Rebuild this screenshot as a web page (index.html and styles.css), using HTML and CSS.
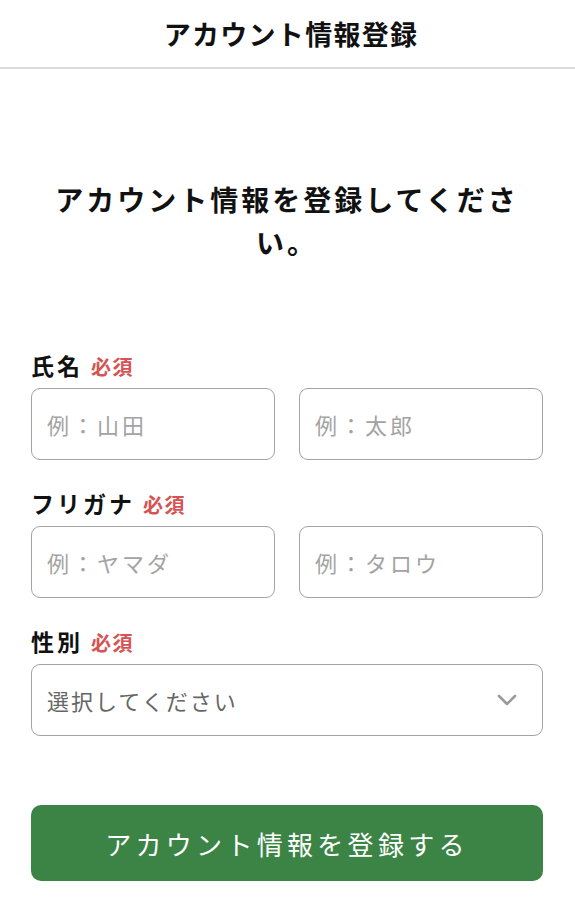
FILE: index.html
```html
<!DOCTYPE html>
<html lang="ja">
    <head>
        <meta charset="UTF-8">
        <title>アカウント情報登録</title>
        <link rel="stylesheet" href="styles.css">
    </head>
    <body>
        <header class="topbar">
            <h1 class="topbar-title">アカウント情報登録</h1>
        </header>
        <main class="page">
            <h2 class="lead">アカウント情報を登録してください。</h2>
            <form class="form">
                <div class="field">
                    <label class="label">氏名<span class="req">必須</span></label>
                    <div class="pair">
                        <input class="input" type="text" placeholder="例：山田">
                        <input class="input" type="text" placeholder="例：太郎">
                    </div>
                </div>
                <div class="field">
                    <label class="label">フリガナ<span class="req">必須</span></label>
                    <div class="pair">
                        <input class="input" type="text" placeholder="例：ヤマダ">
                        <input class="input" type="text" placeholder="例：タロウ">
                    </div>
                </div>
                <div class="field">
                    <label class="label">性別<span class="req">必須</span></label>
                    <div class="select-wrap">
                        <select class="input select">
                            <option>選択してください</option>
                            <option>男性</option>
                            <option>女性</option>
                        </select>
                        <svg class="chevron" width="20" height="12" viewBox="0 0 20 12">
                            <path d="M2 2 L10 10 L18 2" fill="none" stroke="#9a9a9a" stroke-width="2.6" stroke-linecap="round" stroke-linejoin="round"/>
                        </svg>
                    </div>
                </div>
                <button class="submit" type="button">アカウント情報を登録する</button>
            </form>
        </main>
    </body>
</html>
```

FILE: styles.css
```css
*{
    box-sizing: border-box;
}
body{
    margin: 0;
    background: #fff;
    color: #111;
    font-family: "Noto Sans CJK JP", "Noto Sans", sans-serif;
}
.topbar{
    height: 69px;
    padding-left: 7px;
    border-bottom: 2px solid #dcdcdc;
    display: flex;
    align-items: center;
    justify-content: center;
}
.topbar-title{
    margin: 0;
    font-size: 27px;
    font-weight: 700;
    letter-spacing: 1.3px;
    line-height: 1;
}
.page{
    padding: 0 32px 0 31px;
}
.lead{
    margin: 109px 0 0;
    font-size: 28px;
    font-weight: 700;
    line-height: 43px;
    letter-spacing: 3px;
    text-align: center;
}
.form{
    margin-top: 86px;
}
.field{
    margin-bottom: 28px;
}
.label{
    display: block;
    height: 30px;
    line-height: 30px;
    margin-bottom: 8px;
    font-size: 23px;
    font-weight: 700;
    letter-spacing: 3px;
}
.req{
    margin-left: 8px;
    font-size: 20px;
    font-weight: 700;
    color: #d65353;
    letter-spacing: 1.5px;
}
.pair{
    display: grid;
    grid-template-columns: 1fr 1fr;
    gap: 24px;
}
.input{
    width: 100%;
    height: 72px;
    padding: 0 15px;
    border: 1.5px solid #a3a3a3;
    border-radius: 9px;
    background: #fff;
    font-family: inherit;
    font-size: 22px;
    letter-spacing: 3px;
    color: #555;
    outline: none;
}
.input::placeholder{
    color: #a3a3a3;
}
.select-wrap{
    position: relative;
}
.select{
    appearance: none;
    -webkit-appearance: none;
    letter-spacing: 2px;
    color: #666;
}
.chevron{
    position: absolute;
    right: 26px;
    top: 30px;
    pointer-events: none;
}
.submit{
    display: block;
    width: 100%;
    height: 76px;
    margin-top: 69px;
    border: none;
    border-radius: 10px;
    background: #3b8446;
    color: #fff;
    font-family: inherit;
    font-size: 26px;
    letter-spacing: 4.3px;
    cursor: pointer;
}
```
